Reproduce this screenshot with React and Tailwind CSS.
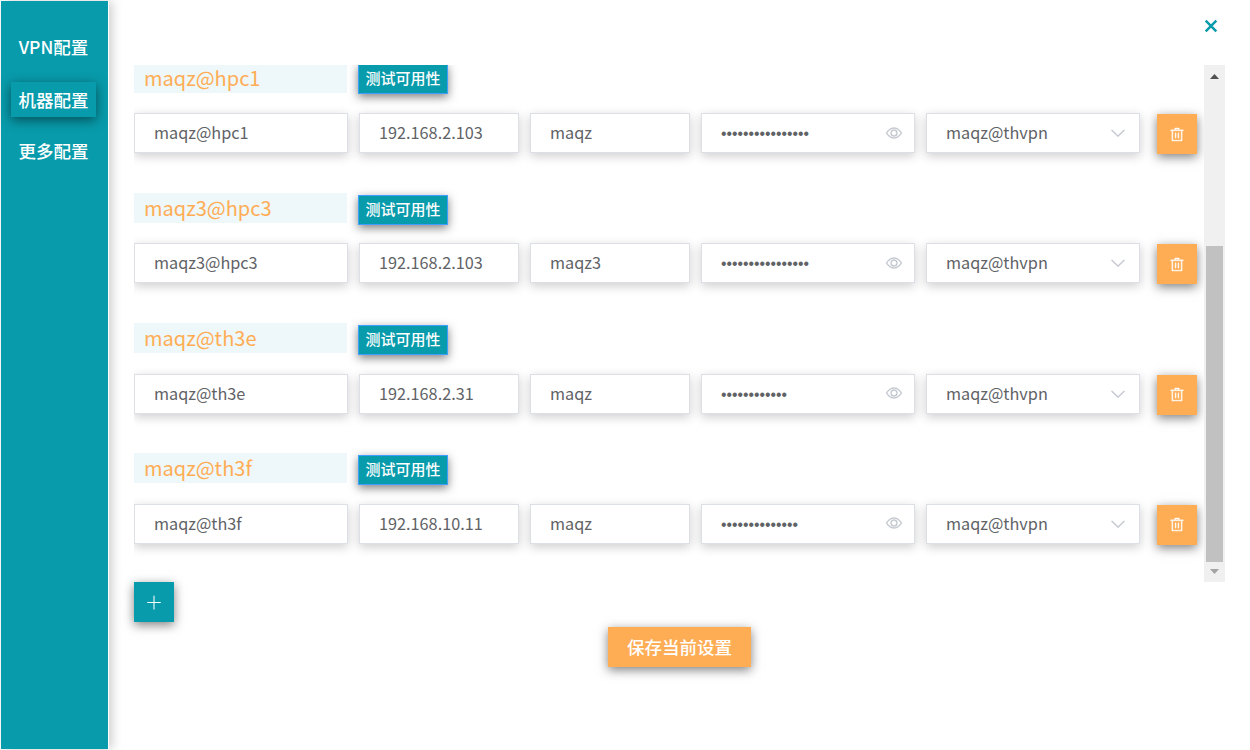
import React from "react";

const ICONS = {
  trash:
    "M160 256H96a32 32 0 0 1 0-64h256V95.936a32 32 0 0 1 32-32h256a32 32 0 0 1 32 32V192h256a32 32 0 1 1 0 64h-64v672a32 32 0 0 1-32 32H192a32 32 0 0 1-32-32V256zm448-64v-64H416v64h192zM224 896h576V256H224v640zm192-128a32 32 0 0 1-32-32V416a32 32 0 0 1 64 0v320a32 32 0 0 1-32 32zm192 0a32 32 0 0 1-32-32V416a32 32 0 0 1 64 0v320a32 32 0 0 1-32 32z",
  view: "M512 160c320 0 512 352 512 352S832 864 512 864 0 512 0 512s192-352 512-352zm0 64c-225.28 0-384.128 208.064-436.8 288 52.608 79.872 211.456 288 436.8 288 225.28 0 384.128-208.064 436.8-288-52.608-79.872-211.456-288-436.8-288zm0 64a224 224 0 1 1 0 448 224 224 0 0 1 0-448zm0 64a160.192 160.192 0 0 0-160 160c0 88.192 71.744 160 160 160s160-71.808 160-160-71.744-160-160-160z",
  down: "M831.872 340.864 512 652.672 192.128 340.864a30.592 30.592 0 0 0-42.752 0 29.12 29.12 0 0 0 0 41.6L489.664 714.24a32 32 0 0 0 44.672 0l340.288-331.712a29.12 29.12 0 0 0 0-41.728 30.592 30.592 0 0 0-42.752 0z",
  plus: "M480 480V128a32 32 0 0 1 64 0v352h352a32 32 0 1 1 0 64H544v352a32 32 0 1 1-64 0V544H128a32 32 0 0 1 0-64h352z",
};

function Icon({ name, className, weight = 0 }) {
  return (
    <svg
      viewBox="0 0 1024 1024"
      className={className}
      fill="currentColor"
      stroke="currentColor"
      strokeWidth={weight}
      overflow="visible"
      aria-hidden="true"
    >
      <path d={ICONS[name]} />
    </svg>
  );
}

const MACHINES = [
  { name: "maqz@hpc1", host: "192.168.2.103", user: "maqz", secret: 16, vpn: "maqz@thvpn" },
  { name: "maqz3@hpc3", host: "192.168.2.103", user: "maqz3", secret: 16, vpn: "maqz@thvpn" },
  { name: "maqz@th3e", host: "192.168.2.31", user: "maqz", secret: 12, vpn: "maqz@thvpn" },
  { name: "maqz@th3f", host: "192.168.10.11", user: "maqz", secret: 14, vpn: "maqz@thvpn" },
];

const FIELD =
  "flex h-[40px] shrink-0 items-center border border-[#dcdfe6] bg-white pl-[19px] text-[16.25px] leading-[36px] text-[#606266] shadow-[0_3px_10px_rgba(0,0,0,0.2)]";

function Machine({ machine }) {
  return (
    <section className="h-[130.2px] shrink-0">
      <div className="flex h-[50.4px] items-start">
        <h2 className="h-[30px] w-[213px] bg-[#eef7f9] pl-[10px] text-[20px] leading-[30px] text-[#ffad55]">
          {machine.name}
        </h2>
        <button className="mt-[1.6px] ml-[11px] h-[30px] w-[90px] border border-[#409eff] bg-[#089bab] pb-[2px] text-center text-[15px] leading-[26px] font-medium text-white shadow-[0_3px_10px_rgba(0,0,0,0.5)]">
          测试可用性
        </button>
      </div>
      <div className="flex items-start">
        <div className={`${FIELD} w-[214px]`}>
          <span className="pb-[2px]">{machine.name}</span>
        </div>
        <div className={`${FIELD} ml-[11px] w-[160px]`}>
          <span className="pb-[2px]">{machine.host}</span>
        </div>
        <div className={`${FIELD} ml-[11px] w-[160px]`}>
          <span className="pb-[2px]">{machine.user}</span>
        </div>
        <div className={`${FIELD} ml-[11px] w-[214px] justify-between pr-[12px]`}>
          <span className="pt-[2px] font-['Liberation_Sans',sans-serif] text-[15.7px]">
            {"•".repeat(machine.secret)}
          </span>
          <Icon name="view" weight={20} className="mb-[1px] size-[16px] text-[#c0c4cc]" />
        </div>
        <div className={`${FIELD} ml-[11px] w-[214px] justify-between pr-[12px]`}>
          <span className="pb-[2px]">{machine.vpn}</span>
          <Icon name="down" weight={20} className="size-[18px] text-[#c0c4cc]" />
        </div>
        <button className="mt-[1px] ml-[17px] flex size-[40px] items-center justify-center bg-[#ffad55] text-white shadow-[0_3px_10px_rgba(0,0,0,0.5)]">
          <Icon name="trash" weight={24} className="h-[15px] w-[16px]" />
        </button>
      </div>
    </section>
  );
}

export default function App() {
  return (
    <div className="flex h-[750px] w-[1250px] overflow-hidden bg-white font-['Noto_Sans_CJK_SC',sans-serif]">
      <nav className="my-[1px] ml-[1px] flex w-[107px] shrink-0 flex-col items-start bg-[#089bab] pt-[29px] pl-[10px] text-[17.5px] font-medium text-white shadow-[1px_0_0_#fff,4px_0_10px_rgba(0,0,0,0.2)]">
        <a className="h-[35px] w-[85px] text-center leading-[34px]">VPN配置</a>
        <a className="mt-[17px] h-[35px] w-[85px] text-center leading-[36px] shadow-[0_3px_12px_rgba(0,0,0,0.5)]">
          机器配置
        </a>
        <a className="mt-[16px] h-[35px] w-[85px] text-center leading-[36px]">更多配置</a>
      </nav>

      <main className="flex flex-1 flex-col pl-[26px]">
        <header className="flex h-[65px] shrink-0 justify-end pt-[20px] pr-[33px]">
          <svg viewBox="0 0 12 12" className="size-[12px]" overflow="visible" aria-hidden="true">
            <path d="M.7.7 11.300 11.300M11.300.7.7 11.300" stroke="#089bab" strokeWidth="2.5" fill="none" />
          </svg>
        </header>

        <div className="flex h-[517px] w-[1091px] shrink-0 overflow-hidden">
          <div className="-mt-[2.2px] w-[1070px] shrink-0">
            {MACHINES.map((m) => (
              <Machine key={m.name} machine={m} />
            ))}
          </div>
          <div className="flex w-[21px] shrink-0 flex-col items-center bg-[#f0f0f0]">
            <svg viewBox="0 0 9 5" className="mt-[9px] h-[5px] w-[9px] shrink-0" aria-hidden="true">
              <path d="M0 5 4.5 0 9 5Z" fill="#505050" />
            </svg>
            <div className="mt-[167px] h-[316px] w-[17px] shrink-0 bg-[#c1c1c1]" />
            <svg viewBox="0 0 9 5" className="mt-[7px] h-[5px] w-[9px] shrink-0" aria-hidden="true">
              <path d="M0 0H9L4.500 5Z" fill="#a3a3a3" />
            </svg>
          </div>
        </div>

        <button className="flex size-[40px] shrink-0 items-center justify-center bg-[#089bab] text-white shadow-[0_3px_10px_rgba(0,0,0,0.5)]">
          <Icon name="plus" className="h-[17px] w-[18px]" />
        </button>
        <button className="mt-[5px] ml-[474px] h-[40px] w-[143px] shrink-0 bg-[#ffad55] text-center text-[17.5px] leading-[40px] font-medium text-white shadow-[0_3px_10px_rgba(0,0,0,0.5)]">
          保存当前设置
        </button>
      </main>
    </div>
  );
}
